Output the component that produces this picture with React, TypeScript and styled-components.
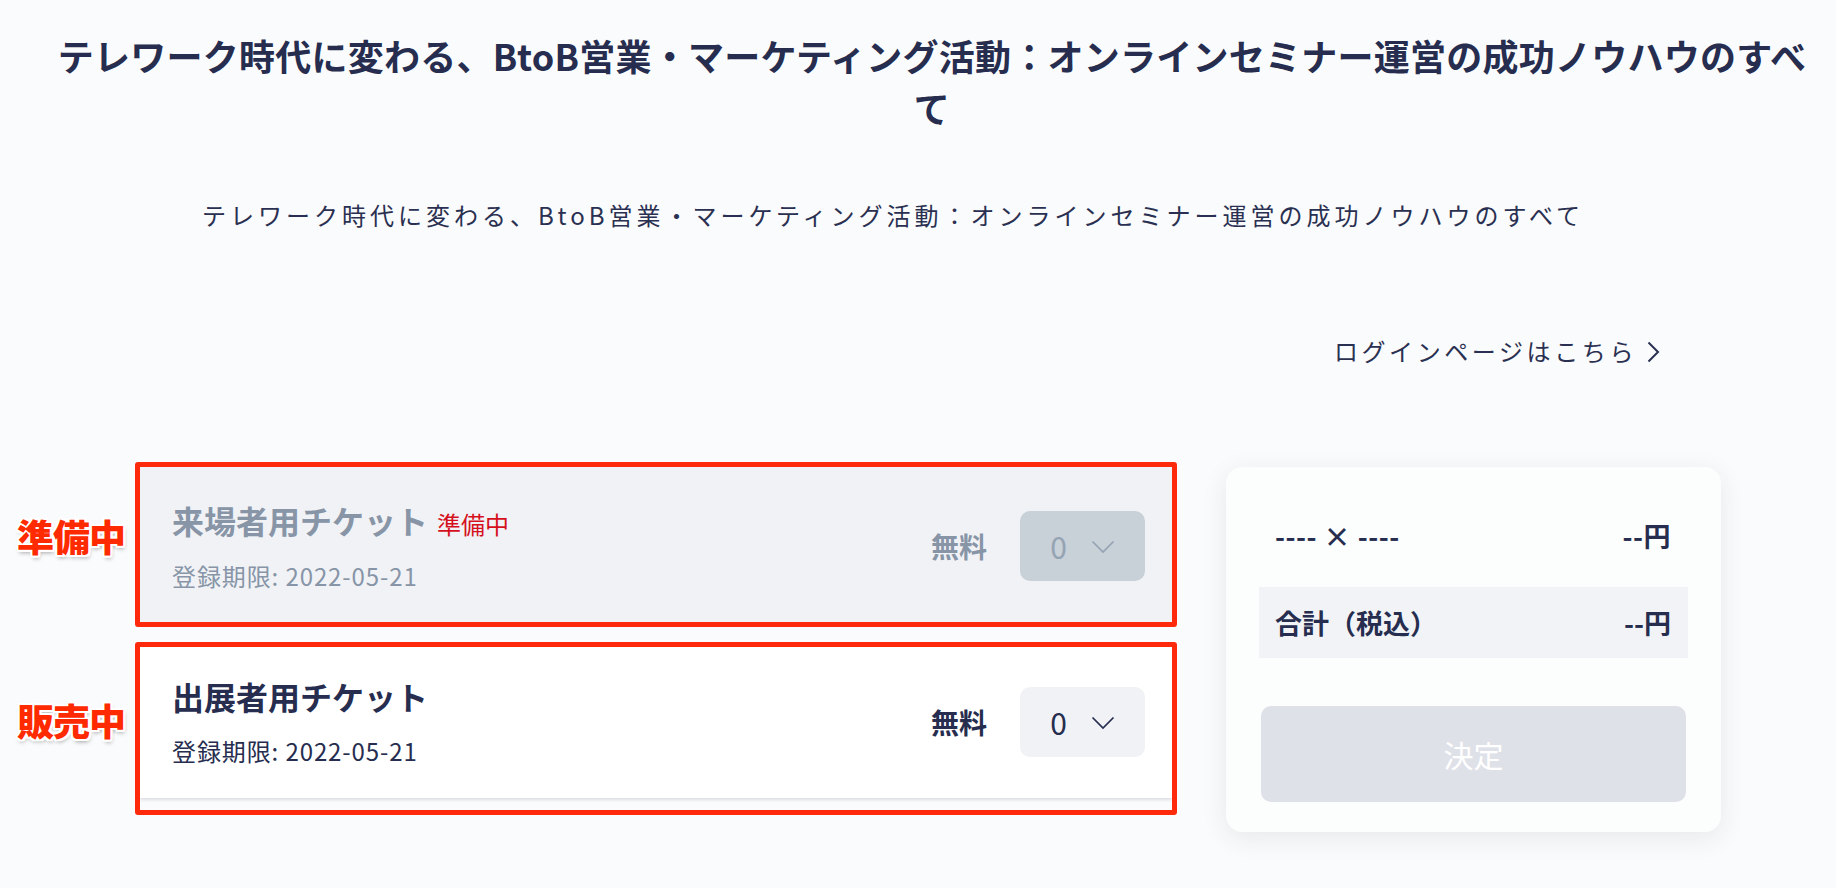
import React from 'react';
import styled, { createGlobalStyle } from 'styled-components';

const GlobalStyle = createGlobalStyle`
  html, body {
    margin: 0;
    padding: 0;
    background: #fafbfc;
  }
  body {
    font-family: "Noto Sans CJK JP", "Noto Sans", sans-serif;
    color: #262d4f;
  }
`;

const EVENT_TITLE =
  'テレワーク時代に変わる、BtoB営業・マーケティング活動：オンラインセミナー運営の成功ノウハウのすべて';

type Ticket = {
  name: string;
  deadline: string;
  price: string;
  disabled: boolean;
  note: string;
  frameTop: number;
  frameBottom: number;
};

const tickets: Ticket[] = [
  {
    name: '来場者用チケット',
    deadline: '2022-05-21',
    price: '無料',
    disabled: true,
    note: '準備中',
    frameTop: -5,
    frameBottom: -5,
  },
  {
    name: '出展者用チケット',
    deadline: '2022-05-21',
    price: '無料',
    disabled: false,
    note: '販売中',
    frameTop: -1,
    frameBottom: -17,
  },
];

const ChevronDown = () => (
  <svg width="24" height="14" viewBox="0 0 24 14">
    <path d="M1.5 1.5 L12 12 L22.5 1.5" fill="none" stroke="currentColor" strokeWidth="1.7" />
  </svg>
);

const ChevronRight = () => (
  <svg width="13" height="22" viewBox="0 0 13 22">
    <path d="M1.5 1.5 L11 11 L1.5 20.5" fill="none" stroke="currentColor" strokeWidth="2" />
  </svg>
);

const App = () => {
  return (
    <>
      <GlobalStyle />
      <Page>
        <Header>
          <Title>{EVENT_TITLE}</Title>
        </Header>
        <Main>
          <Intro>
            <Lead>{EVENT_TITLE}</Lead>
            <LoginRow>
              <LoginLink href="#login">
                ログインページはこちら
                <ChevronRight />
              </LoginLink>
            </LoginRow>
          </Intro>
          <TicketArea>
            <TicketList>
              {tickets.map((t) => (
                <TicketSlot key={t.name}>
                  <TicketCard $disabled={t.disabled}>
                    <Info>
                      <NameLine>
                        <Name $disabled={t.disabled}>{t.name}</Name>
                        {t.disabled && <Pending>準備中</Pending>}
                      </NameLine>
                      <Deadline $disabled={t.disabled}>登録期限: {t.deadline}</Deadline>
                    </Info>
                    <Buy>
                      <Price $disabled={t.disabled}>{t.price}</Price>
                      <Qty $disabled={t.disabled}>
                        <span>0</span>
                        <ChevronDown />
                      </Qty>
                    </Buy>
                  </TicketCard>
                  <Frame $top={t.frameTop} $bottom={t.frameBottom}>
                    <FrameLabel>{t.note}</FrameLabel>
                  </Frame>
                </TicketSlot>
              ))}
            </TicketList>
            <Summary>
              <SumRow>
                <span>---- × ----</span>
                <span>--円</span>
              </SumRow>
              <SumRow $shaded>
                <span>合計（税込）</span>
                <span>--円</span>
              </SumRow>
              <Decide type="button" disabled>
                決定
              </Decide>
            </Summary>
          </TicketArea>
        </Main>
      </Page>
    </>
  );
};

const Page = styled.div`
  min-height: 888px;
  padding-bottom: 40px;
`;
const Header = styled.header`
  padding: 29px 0 0 28px;
`;
const Title = styled.h1`
  max-width: 1760px;
  margin: 0 auto;
  font-size: 36px;
  line-height: 52px;
  font-weight: 700;
  letter-spacing: 0.25px;
  text-align: center;
  color: #262d4f;
`;
const Main = styled.main`
  padding: 0 115px 0 140px;
`;
const Intro = styled.section`
  padding: 64px 61px 0 62px;
`;
const Lead = styled.p`
  margin: 0;
  font-size: 24px;
  line-height: 36px;
  letter-spacing: 4px;
  color: #2a3051;
`;
const LoginRow = styled.div`
  margin-top: 100px;
  display: flex;
  justify-content: flex-end;
`;
const LoginLink = styled.a`
  display: flex;
  align-items: center;
  gap: 10px;
  font-size: 24px;
  line-height: 36px;
  letter-spacing: 0.15em;
  color: #2a3051;
  text-decoration: none;

  svg {
    margin-top: 2px;
  }
`;
const TicketArea = styled.div`
  margin-top: 98px;
  display: flex;
  align-items: flex-start;
  gap: 54px;
`;
const TicketList = styled.div`
  flex: 1;
  display: flex;
  flex-direction: column;
  gap: 21px;
`;
const TicketSlot = styled.div`
  position: relative;
`;
const TicketCard = styled.div<{ $disabled: boolean }>`
  height: 155px;
  box-sizing: border-box;
  padding: 2px 27px 0 32px;
  display: flex;
  align-items: center;
  justify-content: space-between;
  background: ${(p) => (p.$disabled ? '#f1f2f6' : '#ffffff')};
  box-shadow: ${(p) => (p.$disabled ? 'none' : '0 2px 3px rgba(40, 50, 80, 0.14)')};
`;
const Info = styled.div`
  display: flex;
  flex-direction: column;
  gap: 19px;
`;
const NameLine = styled.div`
  display: flex;
  align-items: baseline;
  gap: 9px;
`;
const Name = styled.span<{ $disabled: boolean }>`
  font-size: 32px;
  line-height: 40px;
  font-weight: 700;
  color: ${(p) => (p.$disabled ? '#8795a7' : '#262d4f')};
`;
const Pending = styled.span`
  font-size: 24px;
  color: #d5101c;
`;
const Deadline = styled.span<{ $disabled: boolean }>`
  font-size: 24px;
  line-height: 32px;
  letter-spacing: 0.9px;
  color: ${(p) => (p.$disabled ? '#8795a7' : '#262d4f')};
`;
const Buy = styled.div`
  display: flex;
  align-items: center;
  gap: 33px;
`;
const Price = styled.span<{ $disabled: boolean }>`
  font-size: 28px;
  font-weight: 700;
  color: ${(p) => (p.$disabled ? '#8795a7' : '#262d4f')};
`;
const Qty = styled.div<{ $disabled: boolean }>`
  width: 125px;
  height: 70px;
  border-radius: 10px;
  display: flex;
  align-items: center;
  justify-content: center;
  gap: 24px;
  font-size: 30px;
  background: ${(p) => (p.$disabled ? '#c8d0d8' : '#f1f2f6')};
  color: ${(p) => (p.$disabled ? '#95a3b3' : '#262d4f')};

  svg {
    margin-top: 2px;
  }
`;
const Frame = styled.div<{ $top: number; $bottom: number }>`
  position: absolute;
  top: ${(p) => p.$top}px;
  bottom: ${(p) => p.$bottom}px;
  left: -5px;
  right: -5px;
  border: 5px solid #ff2a0c;
  border-radius: 3px;
  pointer-events: none;
`;
const FrameLabel = styled.span`
  position: absolute;
  right: calc(100% + 15px);
  top: 50%;
  transform: translateY(calc(-50% - 9px));
  white-space: nowrap;
  font-size: 37px;
  line-height: 1;
  font-weight: 900;
  letter-spacing: -1px;
  color: #ff2a00;
  text-shadow: 2px 0 0 #fff, -2px 0 0 #fff, 0 2px 0 #fff, 0 -2px 0 #fff, 2px 2px 0 #fff,
    -2px 2px 0 #fff, 2px -2px 0 #fff, -2px -2px 0 #fff, 1px 3px 4px rgba(0, 0, 0, 0.35);
`;
const Summary = styled.aside`
  width: 495px;
  box-sizing: border-box;
  padding: 37px 33px 30px;
  background: #fcfdfd;
  border-radius: 16px;
  box-shadow: 0 6px 26px rgba(30, 40, 70, 0.09);
`;
const SumRow = styled.div<{ $shaded?: boolean }>`
  height: ${(p) => (p.$shaded ? '71px' : '63px')};
  margin-top: ${(p) => (p.$shaded ? '20px' : '0')};
  padding: 0 17px 0 16px;
  display: flex;
  align-items: center;
  justify-content: space-between;
  font-size: 27px;
  font-weight: 700;
  letter-spacing: ${(p) => (p.$shaded ? '0' : '0.5px')};
  color: #262d4f;
  background: ${(p) => (p.$shaded ? '#f2f3f6' : 'transparent')};
`;
const Decide = styled.button`
  display: block;
  width: calc(100% - 4px);
  height: 96px;
  margin: 48px 2px 0;
  border: 0;
  border-radius: 10px;
  background: #dfe1e8;
  color: #ffffff;
  font-family: inherit;
  font-size: 30px;
`;

export default App;
